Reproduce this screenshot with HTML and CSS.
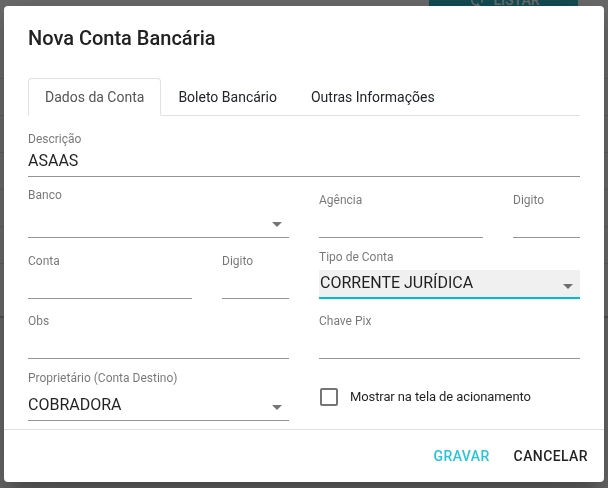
FILE: index.html
```html
<!DOCTYPE html>
<html lang="pt-BR">

<head>
    <meta charset="UTF-8">
    <meta name="viewport" content="width=device-width, initial-scale=1.0">
    <title>Contas Bancárias</title>
    <link rel="stylesheet" href="styles.css">
</head>

<body>
    <!-- tela de fundo (lista de contas) -->
    <div class="page">
        <div class="page-toolbar">
            <button class="btn-listar">
                <svg width="18" height="18" viewBox="0 0 24 24"><path fill="currentColor" d="M12 4V1L8 5l4 4V6c3.31 0 6 2.690 6 6 0 1.01-.25 1.97-.7 2.8l1.46 1.46C19.54 15.03 20 13.57 20 12c0-4.42-3.58-8-8-8zm0 14c-3.31 0-6-2.69-6-6 0-1.01.25-1.97.7-2.8L5.24 7.740C4.46 8.97 4 10.43 4 12c0 4.42 3.58 8 8 8v3l4-4-4-4v3z"/></svg>
                LISTAR
            </button>
        </div>
        <div class="page-table">
            <div class="page-row"></div>
            <div class="page-row"></div>
            <div class="page-row"></div>
            <div class="page-row"></div>
            <div class="page-row"></div>
            <div class="page-row"></div>
            <div class="page-row page-row-total"></div>
        </div>
    </div>

    <div class="overlay"></div>

    <div class="dialog">
        <h2 class="dialog-title">Nova Conta Bancária</h2>

        <ul class="tabs">
            <li class="tab active">Dados da Conta</li>
            <li class="tab">Boleto Bancário</li>
            <li class="tab">Outras Informações</li>
        </ul>

        <div class="form">
            <div class="row row-full">
                <div class="field">
                    <label>Descrição</label>
                    <div class="control">ASAAS</div>
                </div>
            </div>

            <div class="row row-2">
                <div class="field">
                    <label>Banco</label>
                    <div class="control select"><span class="arrow"></span></div>
                </div>
                <div class="sub-row">
                    <div class="field">
                        <label>Agência</label>
                        <div class="control"></div>
                    </div>
                    <div class="field">
                        <label>Digito</label>
                        <div class="control"></div>
                    </div>
                </div>
            </div>

            <div class="row row-3">
                <div class="sub-row">
                    <div class="field">
                        <label>Conta</label>
                        <div class="control"></div>
                    </div>
                    <div class="field">
                        <label>Digito</label>
                        <div class="control"></div>
                    </div>
                </div>
                <div class="field">
                    <label>Tipo de Conta</label>
                    <div class="control select focused">
                        <div class="filled">CORRENTE JURÍDICA</div>
                        <span class="arrow"></span>
                    </div>
                </div>
            </div>

            <div class="row row-4">
                <div class="field">
                    <label>Obs</label>
                    <div class="control"></div>
                </div>
                <div class="field">
                    <label>Chave Pix</label>
                    <div class="control"></div>
                </div>
            </div>

            <div class="row row-5">
                <div class="field">
                    <label>Proprietário (Conta Destino)</label>
                    <div class="control select">COBRADORA<span class="arrow"></span></div>
                </div>
                <div class="checkbox-field">
                    <span class="checkbox"></span>
                    <span class="checkbox-label">Mostrar na tela de acionamento</span>
                </div>
            </div>
        </div>

        <div class="dialog-actions">
            <button class="btn-flat primary">Gravar</button>
            <button class="btn-flat">Cancelar</button>
        </div>
    </div>
</body>

</html>
```

FILE: styles.css
```css
body {
    margin: 0;
    background-color: #f5f5f5;
    font-family: Roboto, 'Liberation Sans', Arial, sans-serif;
    overflow: hidden;
}

/* fundo */
.page-toolbar {
    height: 42px;
    display: flex;
    justify-content: flex-end;
    align-items: flex-start;
    padding-right: 30px;
}

.btn-listar {
    width: 149px;
    height: 36px;
    margin-top: -18px;
    border: none;
    border-radius: 2px;
    background-color: #00a4b4;
    color: #fff;
    font-family: inherit;
    font-size: 14px;
    font-weight: 500;
    display: flex;
    align-items: center;
    justify-content: center;
    gap: 8px;
}

.page-row {
    height: 36px;
    border-bottom: 1px solid #ddd;
    background-color: #fff;
}

.page-row-total {
    height: 52px;
    border-bottom: 2px solid #bbb;
}

.overlay {
    position: fixed;
    inset: 0;
    background-color: rgba(33, 33, 33, 0.65);
}

/* dialogo */
.dialog {
    position: fixed;
    left: 4px;
    top: 6px;
    width: 600px;
    height: 476px;
    background-color: #fff;
    border-radius: 4px;
    box-shadow: 0 11px 15px -7px rgba(0, 0, 0, 0.2), 0 24px 38px 3px rgba(0, 0, 0, 0.14), 0 9px 46px 8px rgba(0, 0, 0, 0.12);
    display: flex;
    flex-direction: column;
}

.dialog-title {
    margin: 0;
    padding: 16px 24px 0;
    font-size: 20px;
    font-weight: 500;
    line-height: 32px;
    color: #212121;
}

.tabs {
    list-style: none;
    margin: 24px 24px 0;
    padding: 0;
    display: flex;
    border-bottom: 1px solid #dee2e6;
}

.tab {
    padding: 8px 16px;
    margin-bottom: -1px;
    border: 1px solid transparent;
    border-top-left-radius: 4px;
    border-top-right-radius: 4px;
    font-size: 14px;
    line-height: 20px;
    color: #212529;
}

.tab.active {
    color: #555;
    background-color: #fff;
    border-color: #dee2e6 #dee2e6 #fff;
}

.form {
    padding: 15px 24px 8px;
    border-bottom: 1px solid #e0e0e0;
}

.row {
    display: grid;
    grid-template-columns: 1fr 1fr;
    column-gap: 30px;
    align-items: end;
}

.row-full {
    grid-template-columns: 1fr;
}

.row-2 {
    margin-top: 10px;
}

.row-3 {
    margin-top: 11px;
}

.row-4 {
    margin-top: 14px;
}

.row-5 {
    margin-top: 11px;
}

.sub-row {
    display: grid;
    grid-template-columns: 1fr 67px;
    column-gap: 30px;
    align-items: end;
}

.field label {
    display: block;
    font-size: 12px;
    line-height: 16px;
    color: rgba(0, 0, 0, 0.54);
}

.control {
    position: relative;
    height: 24px;
    padding: 2px 0 3px;
    border-bottom: 1px solid #949494;
    font-size: 16px;
    line-height: 24px;
    color: rgba(0, 0, 0, 0.87);
}

.control.select {
    padding: 7px 0 3px;
}

.control.focused {
    height: 27px;
    padding: 5px 0 0;
    border-bottom: 2px solid #00bcd4;
}

.filled {
    height: 24px;
    padding: 1px 0 2px 1px;
    background-color: #f0f0f0;
}

.arrow {
    position: absolute;
    right: 7px;
    top: 19px;
    width: 0;
    height: 0;
    border-left: 5px solid transparent;
    border-right: 5px solid transparent;
    border-top: 5px solid rgba(0, 0, 0, 0.54);
}

.checkbox-field {
    align-self: start;
    margin-top: 18px;
    padding-left: 1px;
    display: flex;
    align-items: center;
    gap: 12px;
}

.checkbox {
    width: 14px;
    height: 14px;
    border: 2px solid #757575;
    border-radius: 2px;
}

.checkbox-label {
    font-size: 13px;
    line-height: 18px;
    letter-spacing: -0.1px;
    color: rgba(0, 0, 0, 0.87);
}

.dialog-actions {
    display: flex;
    justify-content: flex-end;
    gap: 8px;
    padding: 8px;
}

.btn-flat {
    height: 36px;
    padding: 0 8px;
    border: none;
    background: none;
    font-family: inherit;
    font-size: 14px;
    font-weight: 500;
    line-height: 36px;
    letter-spacing: 0.4px;
    text-transform: uppercase;
    color: rgba(0, 0, 0, 0.87);
    cursor: pointer;
}

.btn-flat.primary {
    color: #26c6da;
}
```
